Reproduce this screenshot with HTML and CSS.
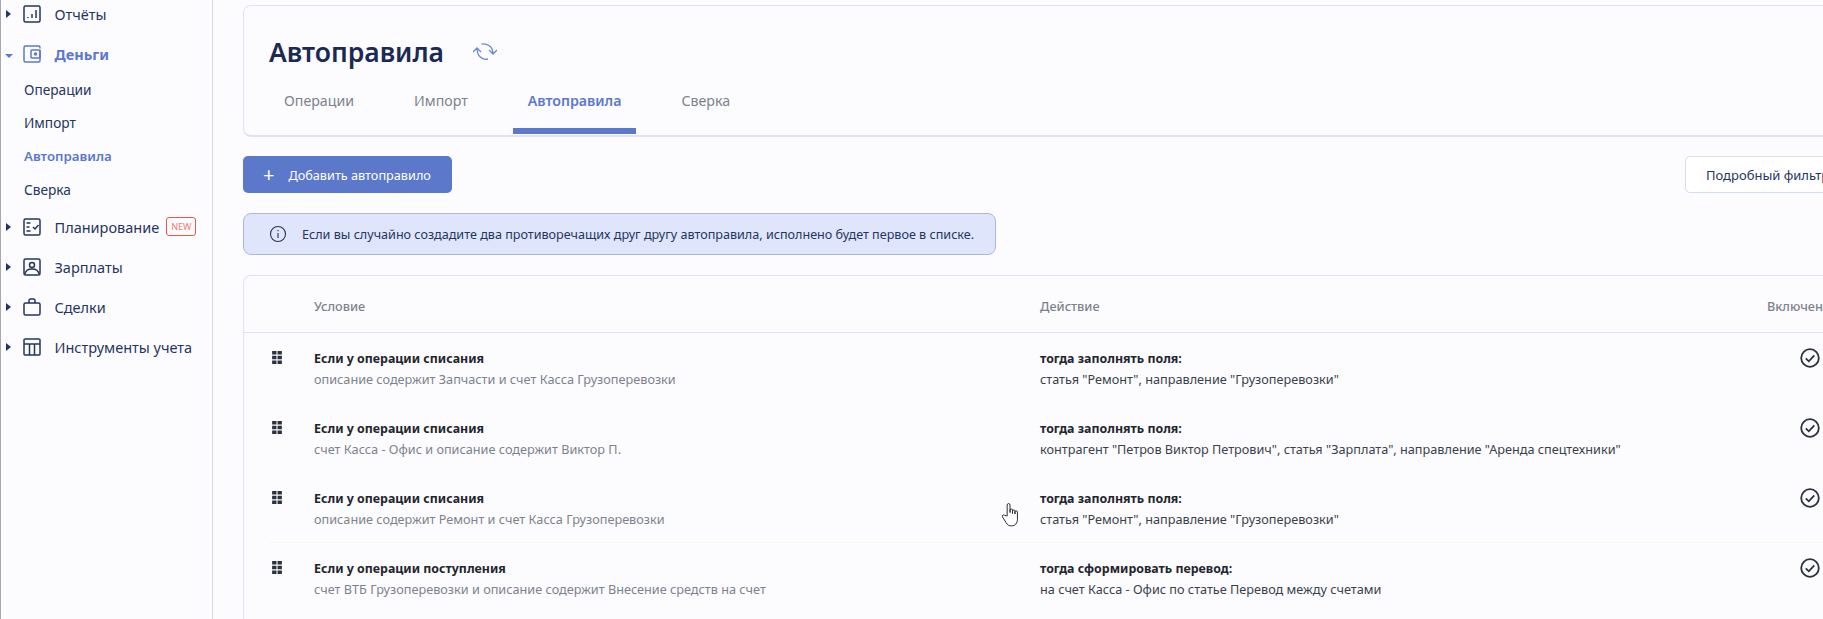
FILE: index.html
```html
<!DOCTYPE html>
<html lang="ru">
<head>
    <meta charset="UTF-8">
    <title>Автоправила</title>
    <link rel="stylesheet" href="styles.css">
</head>
<body>
    <aside class="sidebar">
        <div class="nav-item">
            <span class="arrow"></span>
            <svg class="nav-icon" viewBox="0 0 18 18"><rect x="1" y="1" width="16" height="16" rx="1.5"/><path d="M5 13v-1M9 13V9M13 13V5"/></svg>
            <span>Отчёты</span>
        </div>
        <div class="nav-item active">
            <span class="arrow down"></span>
            <svg class="nav-icon" viewBox="0 0 18 18"><path d="M17 3.500V2.500a1.500 1.500 0 0 0-1.500-1.500H2.500A1.500 1.500 0 0 0 1 2.500v13A1.500 1.500 0 0 0 2.500 17h13a1.500 1.500 0 0 0 1.500-1.500V5"/><rect x="8" y="5" width="9" height="8" rx="1"/><circle cx="12.500" cy="9" r="1"/></svg>
            <span>Деньги</span>
        </div>
        <div class="sub-nav">
            <div class="sub-item">Операции</div>
            <div class="sub-item">Импорт</div>
            <div class="sub-item current">Автоправила</div>
            <div class="sub-item">Сверка</div>
        </div>
        <div class="nav-item">
            <span class="arrow"></span>
            <svg class="nav-icon" viewBox="0 0 18 18"><rect x="1" y="1" width="16" height="16" rx="1.500"/><path d="M3.500 5h4M3.500 9h3M3.500 13h4M10 9l2 2 3.500-4"/></svg>
            <span>Планирование</span>
            <span class="new-badge">NEW</span>
        </div>
        <div class="nav-item">
            <span class="arrow"></span>
            <svg class="nav-icon" viewBox="0 0 18 18"><rect x="1" y="1" width="16" height="16" rx="1.500"/><circle cx="9" cy="7" r="2.500"/><path d="M2 16c.5-3.500 3-5 7-5s6.500 1.500 7 5"/></svg>
            <span>Зарплаты</span>
        </div>
        <div class="nav-item">
            <span class="arrow"></span>
            <svg class="nav-icon" viewBox="0 0 18 18"><rect x="1" y="5" width="16" height="12" rx="1.500"/><path d="M6 5V2.500A1.500 1.500 0 0 1 7.500 1h3A1.500 1.500 0 0 1 12 2.500V5"/></svg>
            <span>Сделки</span>
        </div>
        <div class="nav-item">
            <span class="arrow"></span>
            <svg class="nav-icon" viewBox="0 0 18 18"><rect x="1" y="1" width="16" height="16" rx="1"/><path d="M1 6h16M6.500 6v11M11.500 6v11"/></svg>
            <span>Инструменты учета</span>
        </div>
    </aside>

    <main class="content">
        <section class="head-card">
            <div class="title-row">
                <h1>Автоправила</h1>
                <svg class="sync-icon" viewBox="0 0 24 20"><path d="M8.500 2C14 1.500 20 4 20 12M16 8l4 4 4-4"/><path d="M15 17C9 18.500 4 14 4 6M0 10l4-4 4 4"/></svg>
            </div>
            <div class="tabs">
                <div class="tab">Операции</div>
                <div class="tab">Импорт</div>
                <div class="tab selected">Автоправила</div>
                <div class="tab">Сверка</div>
            </div>
        </section>

        <div class="toolbar">
            <button class="btn-add"><span class="plus">+</span>Добавить автоправило</button>
            <button class="btn-filter">Подробный фильтр</button>
        </div>

        <div class="notice">
            <svg class="info-icon" viewBox="0 0 18 18"><circle cx="9" cy="9" r="7.500"/><path d="M9 8v5"/><path d="M9 5v1.200"/></svg>
            Если вы случайно создадите два противоречащих друг другу автоправила, исполнено будет первое в списке.
        </div>

        <section class="rules-card">
            <div class="rules-head">
                <div></div>
                <div>Условие</div>
                <div>Действие</div>
                <div>Включено</div>
            </div>

            <div class="rule">
                <svg class="drag" viewBox="0 0 9 12"><path d="M0 0h4v3.300H0zM5 0h4v3.300H5zM0 4.350h4v3.300H0zM5 4.350h4v3.300H5zM0 8.700h4V12H0zM5 8.700h4V12H5z"/></svg>
                <div><b>Если у операции списания</b><p>описание содержит Запчасти и счет Касса Грузоперевозки</p></div>
                <div class="action"><b>тогда заполнять поля:</b><p>статья "Ремонт", направление "Грузоперевозки"</p></div>
                <svg class="check" viewBox="0 0 20 20"><circle cx="10" cy="10" r="8.800"/><path d="M5.800 10.300l3 3 5.500-6"/></svg>
            </div>
            <div class="rule">
                <svg class="drag" viewBox="0 0 9 12"><path d="M0 0h4v3.300H0zM5 0h4v3.300H5zM0 4.350h4v3.300H0zM5 4.350h4v3.300H5zM0 8.700h4V12H0zM5 8.700h4V12H5z"/></svg>
                <div><b>Если у операции списания</b><p>счет Касса - Офис и описание содержит Виктор П.</p></div>
                <div class="action"><b>тогда заполнять поля:</b><p>контрагент "Петров Виктор Петрович", статья "Зарплата", направление "Аренда спецтехники"</p></div>
                <svg class="check" viewBox="0 0 20 20"><circle cx="10" cy="10" r="8.800"/><path d="M5.800 10.300l3 3 5.500-6"/></svg>
            </div>
            <div class="rule lined">
                <svg class="drag" viewBox="0 0 9 12"><path d="M0 0h4v3.300H0zM5 0h4v3.300H5zM0 4.350h4v3.300H0zM5 4.350h4v3.300H5zM0 8.700h4V12H0zM5 8.700h4V12H5z"/></svg>
                <div><b>Если у операции списания</b><p>описание содержит Ремонт и счет Касса Грузоперевозки</p></div>
                <div class="action"><b>тогда заполнять поля:</b><p>статья "Ремонт", направление "Грузоперевозки"</p></div>
                <svg class="check" viewBox="0 0 20 20"><circle cx="10" cy="10" r="8.800"/><path d="M5.800 10.300l3 3 5.500-6"/></svg>
            </div>
            <div class="rule">
                <svg class="drag" viewBox="0 0 9 12"><path d="M0 0h4v3.300H0zM5 0h4v3.300H5zM0 4.350h4v3.300H0zM5 4.350h4v3.300H5zM0 8.700h4V12H0zM5 8.700h4V12H5z"/></svg>
                <div><b>Если у операции поступления</b><p>счет ВТБ Грузоперевозки и описание содержит Внесение средств на счет</p></div>
                <div class="action"><b>тогда сформировать перевод:</b><p>на счет Касса - Офис по статье Перевод между счетами</p></div>
                <svg class="check" viewBox="0 0 20 20"><circle cx="10" cy="10" r="8.800"/><path d="M5.800 10.300l3 3 5.500-6"/></svg>
            </div>
        </section>
    </main>

    <svg class="cursor" viewBox="0 0 20 26"><path d="M6.500 14.500V3a1.500 1.500 0 0 1 3 0v8V8.500a1.300 1.300 0 0 1 2.600 0V12 9.500a1.300 1.300 0 0 1 2.600 0V12.500 10.500a1.300 1.300 0 0 1 2.600 0V18c0 4-2.500 7-6 7-3 0-4.500-1-6-3.500L1.500 15.500c-.8-1.500 1.200-3 2.500-1.500z"/></svg>
</body>
</html>
```

FILE: styles.css
```css
* {
    box-sizing: border-box;
}
html, body {
    height: 100%;
}
body {
    margin: 0;
    display: flex;
    overflow: hidden;
    background: #fcfcfe;
    font-family: "Noto Sans", sans-serif;
    color: #25355e;
}
.sidebar {
    flex: 0 0 213px;
    height: 100%;
    border-left: 1px solid #a8a8ac;
    border-right: 1px solid #d5d9ee;
}
.nav-item {
    display: flex;
    align-items: center;
    height: 40px;
    padding-left: 5px;
    font-size: 14.5px;
}
.nav-item:first-child {
    height: 28px;
    margin-bottom: 6px;
}
.nav-item.active {
    color: #5b78cb;
    font-weight: 700;
}
.arrow {
    flex: none;
    width: 0;
    height: 0;
    margin-right: 12px;
    border-top: 4px solid transparent;
    border-bottom: 4px solid transparent;
    border-left: 5px solid #25355e;
}
.arrow.down {
    margin-top: 3px;
    margin-left: -1px;
    margin-right: 10px;
    border-top: 4px solid #5b78cb;
    border-bottom: 0;
    border-left: 4px solid transparent;
    border-right: 4px solid transparent;
    width: 8px;
}
.nav-icon {
    flex: none;
    width: 18px;
    height: 18px;
    margin-right: 13.5px;
    fill: none;
    stroke: currentColor;
    stroke-width: 1.5;
}
.sub-nav {
    margin-top: -1px;
    padding-left: 23px;
    font-size: 13.7px;
}
.sub-item {
    height: 33.4px;
    line-height: 33.4px;
}
.sub-item.current {
    color: #5b78cb;
    font-size: 13.3px;
    font-weight: 600;
}
.new-badge {
    margin-left: 7px;
    padding: 0 4px;
    border: 1px solid #e2594f;
    border-radius: 3px;
    color: #e8806f;
    font-size: 9px;
    line-height: 17px;
    font-weight: 400;
}

.content {
    flex: none;
    width: 1700px;
    height: 100%;
    overflow: hidden;
    padding: 5px 0 0 30px;
}
.head-card {
    height: 132px;
    padding: 31px 0 0 25px;
    border: 1px solid #dfe2f2;
    border-bottom-width: 2px;
    border-radius: 8px;
}
.title-row {
    display: flex;
    align-items: center;
    height: 30px;
}
h1 {
    margin: 0;
    font-size: 26.5px;
    font-weight: 600;
    color: #1a2a52;
}
.sync-icon {
    width: 24px;
    height: 20px;
    margin-left: 29px;
    fill: none;
    stroke: #6e87d2;
    stroke-width: 1.3;
}
.tabs {
    display: flex;
    margin-top: 19px;
}
.tab {
    height: 48px;
    padding: 0 15px;
    margin-right: 30px;
    font-size: 14.2px;
    line-height: 30px;
    color: #7c828c;
}
.tab.selected {
    border-bottom: 6px solid #5b78cb;
    border-radius: 3px 3px 0 0;
    color: #5b78cb;
    font-weight: 600;
}

.toolbar {
    display: flex;
    justify-content: space-between;
    margin-top: 19px;
}
.btn-add, .btn-filter {
    height: 37px;
    border-radius: 5px;
    font-family: inherit;
    font-size: 12.7px;
}
.btn-add {
    display: flex;
    align-items: center;
    width: 209px;
    padding: 0 0 0 20px;
    border: none;
    background: #5b78cb;
    color: #fff;
}
.plus {
    margin-right: 14px;
    font-size: 20px;
    font-weight: 400;
    line-height: 1;
}
.btn-filter {
    width: 228px;
    padding: 0 0 0 20px;
    border: 1px solid #d5ddf6;
    background: #fff;
    color: #25355e;
    font-size: 13px;
    text-align: left;
}

.notice {
    display: flex;
    align-items: center;
    width: 753px;
    height: 42px;
    margin-top: 20px;
    padding-left: 25px;
    border: 1px solid #a9b7e0;
    border-radius: 8px;
    background: #dfe5fb;
    font-size: 12.6px;
}
.info-icon {
    width: 18px;
    height: 18px;
    margin-right: 15px;
    fill: none;
    stroke: #25355e;
    stroke-width: 1.1;
}

.rules-card {
    margin-top: 20px;
    padding-bottom: 60px;
    border: 1px solid #dfe2f2;
    border-radius: 8px 0 0 0;
    border-right: none;
    font-size: 12.7px;
}
.rules-head, .rule {
    display: grid;
    grid-template-columns: 45px 726px 727px 86px;
    margin-left: 25px;
}
.rules-head {
    height: 57px;
    margin-left: 0;
    padding: 4px 0 0 25px;
    align-items: center;
    border-bottom: 1px solid #dfe2f2;
    color: #7c828c;
    font-weight: 500;
}
.rule {
    height: 70px;
    padding-top: 17px;
    color: #7c828c;
}
.rule.lined {
    border-bottom: 1px solid #fbf7ea;
}
.rule b {
    display: block;
    color: #22252d;
    font-size: 12.4px;
    line-height: 18px;
}
.rule p {
    margin: 2px 0 0;
    line-height: 18px;
}
.action p {
    color: #3a3f4a;
}
.drag {
    width: 10px;
    height: 13px;
    margin: 1px 0 0 3px;
    fill: #2c3140;
}
.check {
    width: 20px;
    height: 20px;
    margin: -2px 0 0 33px;
    fill: none;
    stroke: #2c3140;
    stroke-width: 1.8;
}
.cursor {
    position: absolute;
    left: 1001px;
    top: 502px;
    width: 19px;
    height: 25px;
    fill: #fff;
    stroke: #22252d;
    stroke-width: 1;
}
```
